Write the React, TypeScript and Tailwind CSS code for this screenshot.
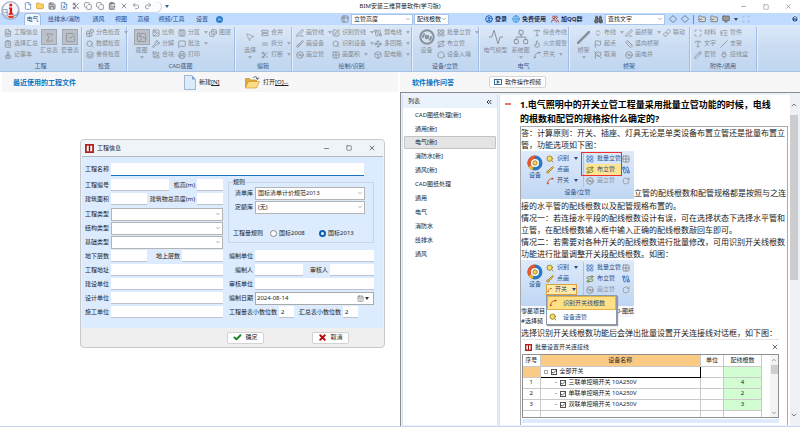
import React from "react";
import {
  FileText, ClipboardList, Sigma, SquareCheckBig, Blocks, Search, Layers, Image, Images, Columns3, MessageSquare,
  Wrench, Combine, Printer, MousePointer2, Scissors, PenLine, Brush, Disc3, Grid2x2, Spline, Network, Flag, FlagOff,
  Ruler, Type, Flame, Cable, LayoutGrid, Hexagon, SquarePen, Slash, Route, Box, Pencil, StretchHorizontal, Equal,
  Link, Table2, Undo2, Redo2, Save, Copy, ClipboardPaste, X, Minus, Square, ChevronDown, ChevronUp, ChevronsLeft,
  CircleUser, Globe, Users, Binoculars, Diamond, FolderOutput, Folder, Monitor, Scan, CircleHelp, Check, Play,
  CalendarDays, File as FileIcon, FileSearch, Waypoints, Stamp, ChevronsUpDown, Activity, ListTree, Plug, RotateCw,
} from "lucide-react";

type Icon = React.ComponentType<{ size?: number; strokeWidth?: number; className?: string; fill?: string }>;

function Caret({ className = "" }: { className?: string }) {
  return (
    <svg viewBox="0 0 4 3" className={`h-[3px] w-1 shrink-0 ${className}`}>
      <path d="M0 0h4L2 3z" fill="currentColor" />
    </svg>
  );
}

type RowItem = { icon: Icon; text: string; caret?: boolean };

function Column({ items, width }: { items: RowItem[]; width: string }) {
  return (
    <div className={`flex shrink-0 flex-col ${width}`}>
      {items.map((it) => (
        <button key={it.text} type="button" className="flex h-[11px] items-center gap-[2px] whitespace-nowrap">
          <it.icon size={8} strokeWidth={2.5} className="shrink-0 text-[#8b919a]" />
          <span>{it.text}</span>
          {it.caret && <Caret className="ml-[2px] text-[#a3abb8]" />}
        </button>
      ))}
    </div>
  );
}

function Big({ icon: I, text, width, caret, boxed, size = 15, weight = 1.5 }: {
  icon: Icon; text: string; width: string; caret?: boolean; boxed?: boolean; size?: number; weight?: number;
}) {
  return (
    <button type="button" className={`flex shrink-0 flex-col items-center whitespace-nowrap pt-[2px] ${width}`}>
      <span className={`flex h-4 w-4 items-center justify-center ${boxed ? "border border-[#a3a8b0] bg-[#bcc1c9]" : ""}`}>
        <I size={boxed ? 11 : size} strokeWidth={boxed ? 2 : weight} className="text-[#8b919a]" />
      </span>
      <span className="mt-[1px] leading-[9px]">{text}</span>
      {caret && <Caret className="mt-[1px] text-[#a3abb8]" />}
    </button>
  );
}

function Group({ title, width, children }: { title: string; width: string; children: React.ReactNode }) {
  return (
    <section className={`flex shrink-0 flex-col border-r border-[#9fbde2] shadow-[1px_0_0_#e6f0fc] ${width}`}>
      <div className="flex h-[34px] pl-1">{children}</div>
      <h2 className="text-center leading-[10px] text-[#3d5a85]">{title}</h2>
    </section>
  );
}

const quickIcons: { icon: Icon; color: string; fill: string; name: string }[] = [
  { icon: FileIcon, color: "text-[#4b6f9f]", fill: "white", name: "新建" },
  { icon: Folder, color: "text-[#c88d1d]", fill: "#ffd35c", name: "打开" },
  { icon: Save, color: "text-[#4b4b4b]", fill: "#d8d8d8", name: "保存" },
  { icon: FileSearch, color: "text-[#376fb5]", fill: "white", name: "预览" },
  { icon: Scissors, color: "text-[#555]", fill: "none", name: "剪切" },
  { icon: Copy, color: "text-[#666]", fill: "white", name: "复制" },
  { icon: Copy, color: "text-[#666]", fill: "white", name: "复制格式" },
  { icon: ClipboardPaste, color: "text-[#555]", fill: "#bbb", name: "粘贴" },
  { icon: X, color: "text-[#555]", fill: "none", name: "删除" },
  { icon: Undo2, color: "text-[#777]", fill: "none", name: "撤销" },
  { icon: Redo2, color: "text-[#777]", fill: "none", name: "重做" },
];

function AppMark() {
  return (
    <svg viewBox="0 0 20 20" className="absolute left-[1px] top-[1px] h-[19px] w-[19px]">
      <circle cx="10" cy="10" r="9.3" fill="#c9ced8" stroke="#7c91b5" strokeWidth="0.8" />
      <circle cx="10" cy="9" r="7.5" fill="#f4f7fb" />
      <path d="M2.5 9h4v7M4 12h3M13 15h4l1-4" stroke="#5d8bd0" fill="none" strokeWidth="0.8" />
      <circle cx="10.3" cy="4.3" r="1.6" fill="#d91515" />
      <path d="M8.3 6.8h3.4v6H13v1.6H8v-1.6h1.2V8.2h-.9z" fill="#d91515" />
      <path d="M7 15.5h7l-1.5 2.5h-4z" fill="#e0402c" />
    </svg>
  );
}

function InfoMark({ className = "h-[9px] w-[9px]" }: { className?: string }) {
  return (
    <svg viewBox="0 0 10 10" className={`shrink-0 ${className}`}>
      <path d="M0 0h10v10H0z" fill="#b3201d" />
      <path d="M2 2h2.3v6H2zM5.7 2H8v6H5.7z" fill="#fff" />
      <path d="M4.3 3h1.4v4H4.3z" fill="#7d1111" />
    </svg>
  );
}

function Pick({ label, value, className, box = "border-[#b4b4b4]" }: { label: string; value: string; className: string; box?: string }) {
  return (
    <div className={`relative ${className}`}>
      <select aria-label={label} className={`block h-full w-full appearance-none border bg-white pl-[2px] text-[#222] outline-none ${box}`}>
        <option>{value}</option>
      </select>
      <ChevronDown size={6} className="pointer-events-none absolute right-[2px] top-1/2 -translate-y-1/2 text-[#666]" />
    </div>
  );
}

function TitleBar() {
  return (
    <header className="grid h-[13px] shrink-0 grid-cols-[1fr_auto_1fr] items-center bg-white">
      <div className="flex items-center">
        <div className="ml-5 flex h-[12px] w-[142px] items-center gap-1 rounded-r-full border-b border-r border-[#cdd9ea] bg-[#fafcff] pl-1">
          {quickIcons.map((q) => (
            <button key={q.name} type="button" aria-label={q.name}>
              <q.icon size={8} strokeWidth={2} className={q.color} fill={q.fill} />
            </button>
          ))}
        </div>
        <Caret className="ml-[3px] text-[#3b5f96]" />
      </div>
      <h1 className="text-[#222]">BIM安装三维算量软件(学习版)</h1>
      <div className="flex justify-end gap-4 pr-2 text-[#777]">
        <button type="button" aria-label="最小化"><Minus size={7} /></button>
        <button type="button" aria-label="还原"><Square size={6} /></button>
        <button type="button" aria-label="关闭"><X size={7} /></button>
      </div>
    </header>
  );
}

function MenuBar() {
  const link = "flex items-center gap-[2px] whitespace-nowrap font-bold text-[#1b3157]";
  return (
    <nav className="flex h-3 shrink-0 items-center bg-[#bfdbff] text-[#20488c]">
      <div className="flex w-[341px] shrink-0 items-center pl-6">
        <button type="button" className="flex h-3 w-[17px] items-center justify-center rounded-t-sm border border-b-0 border-[#9dbbe0] bg-[#f3f8ff]">电气</button>
        <button type="button" className="w-[46px]">给排水/消防</button>
        <button type="button" className="w-[23px]">通风</button>
        <button type="button" className="w-[22px]">视图</button>
        <button type="button" className="w-[23px]">高级</button>
        <button type="button" className="w-[33px]">视频/工具</button>
        <button type="button" className="w-[28px]">设置</button>
        <button type="button" aria-label="收起" className="flex h-[7px] w-[7px] items-center justify-center rounded-full bg-[#2f7fd0] text-white">
          <ChevronUp size={5} strokeWidth={4} />
        </button>
      </div>
      <Table2 size={8} className="mr-[2px] shrink-0 text-[#777]" />
      <Pick label="高度" value="立管高度" className="h-[11px] w-[62px] shrink-0" box="border-[#a8c4e8]" />
      <Pick label="根数" value="配线根数" className="ml-[1px] h-[11px] w-[35px] shrink-0" box="border-[#a8c4e8]" />
      <div className="flex w-[145px] shrink-0 items-center gap-[5px] pl-9">
        <a href="#login" className={link}><CircleUser size={8} strokeWidth={3} className="text-[#1c63b7]" />登录</a>
        <a href="#free" className={link}><Globe size={8} className="text-[#2b8bd0]" />免费使用</a>
        <a href="#group" className={link}><Users size={8} strokeWidth={3} className="text-[#b04a3a]" />加QQ群</a>
      </div>
      <Binoculars size={9} className="mr-[2px] shrink-0 text-[#444]" fill="#777" />
      <Pick label="查找" value="查找文字" className="h-[11px] w-[60px] shrink-0" box="border-[#a8c4e8]" />
      <div className="flex items-center gap-1 pl-1 text-[#555]">
        <Diamond size={8} /><Diamond size={8} />
        <span className="h-[9px] w-px bg-[#6f8cb5]" />
        <FolderOutput size={8} fill="#ddd" /><FolderOutput size={8} fill="#ddd" /><Monitor size={8} fill="#999" />
        <Caret className="text-[#444]" />
        <Scan size={8} className="text-[#92a9c9]" />
      </div>
      <CircleHelp size={8} strokeWidth={3} className="ml-auto mr-[1px] shrink-0 text-white" fill="#174fa3" />
    </nav>
  );
}

function Ribbon() {
  return (
    <div className="flex h-[47px] shrink-0 overflow-hidden border-b border-[#a6c3e6] bg-linear-to-b from-[#dce9f9] via-[#cadcf2] to-[#c0d6f0] pt-[2px] text-[#858c96]">
      <Group title="工程" width="w-[82px]">
        <Column width="w-[34px]" items={[{ icon: FileText, text: "工程信息" }, { icon: ClipboardList, text: "选择汇总" }, { icon: Stamp, text: "记事本" }]} />
        <Big icon={Sigma} text="汇总表" width="w-[22px]" boxed />
        <Big icon={SquareCheckBig} text="套量表" width="w-[20px]" boxed />
      </Group>
      <Group title="检查" width="w-[45px]">
        <Column width="w-10" items={[{ icon: Blocks, text: "分色检查", caret: true }, { icon: Search, text: "数据检查" }, { icon: Layers, text: "重叠检查" }]} />
      </Group>
      <Group title="CAD底图" width="w-[108px]">
        <Big icon={Image} text="底图" width="w-[21px]" caret boxed />
        <Column width="w-[26px]" items={[{ icon: Image, text: "比例" }, { icon: Wrench, text: "分解" }, { icon: Combine, text: "合块" }]} />
        <Column width="w-[31px]" items={[{ icon: Columns3, text: "分区", caret: true }, { icon: MessageSquare, text: "批注", caret: true }, { icon: Printer, text: "打印" }]} />
        <Column width="w-6" items={[{ icon: Images, text: "图层" }]} />
      </Group>
      <Group title="编辑" width="w-[57px]">
        <Big icon={MousePointer2} text="选择" width="w-[22px]" caret size={10} />
        <Column width="w-[30px]" items={[{ icon: StretchHorizontal, text: "合并" }, { icon: Equal, text: "拆分", caret: true }, { icon: Scissors, text: "打断", caret: true }]} />
      </Group>
      <Group title="绘制/识别" width="w-[120px]">
        <Column width="w-[36px]" items={[{ icon: PenLine, text: "画管线", caret: true }, { icon: Brush, text: "画设备" }, { icon: Disc3, text: "画立管" }]} />
        <Column width="w-[42px]" items={[{ icon: SquarePen, text: "识别管线", caret: true }, { icon: Search, text: "识别设备", caret: true }, { icon: Grid2x2, text: "画面积", caret: true }]} />
        <Column width="w-[36px]" items={[{ icon: Cable, text: "弱电线", caret: true }, { icon: Waypoints, text: "多回路", caret: true }, { icon: Box, text: "配电箱", caret: true }]} />
      </Group>
      <Group title="设备/立管" width="w-[67px]">
        <Big icon={Disc3} text="设备" width="w-[21px]" size={16} weight={3} />
        <Column width="w-[41px]" items={[{ icon: LayoutGrid, text: "批量立管", caret: true }, { icon: Route, text: "布立管" }, { icon: Hexagon, text: "设备入墙" }]} />
      </Group>
      <Group title="电气" width="w-[90px]">
        <Big icon={Activity} text="电气模型" width="w-[25px]" size={16} />
        <Big icon={Network} text="系统图" width="w-[25px]" caret size={16} />
        <Column width="w-[35px]" items={[{ icon: Type, text: "综合布线" }, { icon: Flame, text: "火灾报警" }, { icon: Spline, text: "开关", caret: true }]} />
      </Group>
      <Group title="桥架" width="w-[121px]">
        <Big icon={Slash} text="桥架" width="w-[21px]" caret size={13} weight={5} />
        <Column width="w-[31px]" items={[{ icon: ChevronsUpDown, text: "布线", caret: true }, { icon: Flag, text: "起点" }, { icon: FlagOff, text: "取消" }]} />
        <Column width="w-[38px]" items={[{ icon: PenLine, text: "画桥架", caret: true }, { icon: Ruler, text: "竖向桥架" }, { icon: Disc3, text: "画电井" }]} />
        <Column width="w-[25px]" items={[{ icon: Link, text: "联动" }]} />
      </Group>
      <Group title="附件/通用" width="w-[67px]">
        <Column width="w-[26px]" items={[{ icon: Scan, text: "材料" }, { icon: Type, text: "文字" }, { icon: Pencil, text: "套管" }]} />
        <Column width="w-[34px]" items={[{ icon: ListTree, text: "管件" }, { icon: Slash, text: "支架" }, { icon: Plug, text: "接线盒" }]} />
      </Group>
    </div>
  );
}

function Field({ id, label, labelWidth, width = "flex-1", value = "" }: {
  id: string; label: string; labelWidth: string; width?: string; value?: string;
}) {
  return (
    <>
      <label htmlFor={id} className={`shrink-0 whitespace-nowrap pr-[2px] text-right ${labelWidth}`}>{label}</label>
      <input id={id} defaultValue={value} className={`h-3 min-w-0 border-b border-[#bdc3ca] bg-white px-[2px] outline-none ${width}`} />
    </>
  );
}

function Combo({ label, value = "", labelWidth, width = "flex-1" }: { label: string; value?: string; labelWidth: string; width?: string }) {
  return (
    <>
      <span className={`shrink-0 pr-[2px] text-right ${labelWidth}`}>{label}</span>
      <Pick label={label} value={value} className={`h-[13px] ${width}`} />
    </>
  );
}

function ProjectDialog() {
  const row = "flex h-[14px] items-center";
  return (
    <form
      role="dialog"
      aria-label="工程信息"
      className="absolute left-20 top-[67px] w-[305px] rounded-[4px] border border-[#c9c9c9] bg-[#efefef] text-[#222]"
      onSubmit={(e) => e.preventDefault()}
    >
      <div className="flex h-4 items-center rounded-t-[4px] bg-[#eff4f9] pl-1 pr-2">
        <InfoMark />
        <h2 className="ml-[3px]">工程信息</h2>
        <div className="ml-auto flex items-center gap-4 text-[#333]">
          <button type="button" aria-label="最小化"><Minus size={7} /></button>
          <button type="button" aria-label="最大化"><Square size={6} /></button>
          <button type="button" aria-label="关闭"><X size={8} /></button>
        </div>
      </div>
      <div className="mx-[1px] border-t border-[#b5b9be] bg-[#dcebfd] pb-[9px] pt-[6px]">
        <div className="flex h-[15px] items-start">
          <label htmlFor="name" className="w-[29px] shrink-0 pr-[2px] pt-[2px] text-right leading-[9px]">工程名称</label>
          <input id="name" className="h-[13px] w-[253px] border-b border-[#1a74c4] bg-white px-[2px] outline-none" autoFocus />
        </div>
        <div className="flex">
          <div className="w-[141px] shrink-0">
            <div className={row}>
              <Field id="no" label="工程编号" labelWidth="w-[29px]" width="w-[58px]" />
              <Field id="eave" label="檐高(m)" labelWidth="w-7" width="w-[26px]" />
            </div>
            <div className={row}>
              <Field id="area" label="建筑面积" labelWidth="w-[29px]" width="w-9" />
              <Field id="height" label="建筑物总高度(m)" labelWidth="w-[50px]" width="w-[26px]" />
            </div>
            <div className={`${row} mt-[1px]`}><Combo label="工程类型" labelWidth="w-[29px]" /></div>
            <div className={row}><Combo label="结构类型" labelWidth="w-[29px]" /></div>
            <div className={row}><Combo label="基础类型" labelWidth="w-[29px]" /></div>
            <div className={row}>
              <Field id="below" label="地下层数" labelWidth="w-[29px]" width="w-9" />
              <Field id="above" label="地上层数" labelWidth="w-[35px]" />
            </div>
            <div className={row}><Field id="addr" label="工程地址" labelWidth="w-[29px]" /></div>
            <div className={row}><Field id="owner" label="建设单位" labelWidth="w-[29px]" /></div>
            <div className={row}><Field id="design" label="设计单位" labelWidth="w-[29px]" /></div>
            <div className={row}><Field id="build" label="施工单位" labelWidth="w-[29px]" /></div>
          </div>
          <div className="ml-[3px] w-[148px]">
            <fieldset className="ml-[2px] h-[65px] border border-[#c8d6e6]">
              <legend className="ml-1 leading-[8px]">规则</legend>
              <div className={row}><Combo label="清单库" value="国标清单计价规范2013" labelWidth="w-[26px]" width="w-[110px]" /></div>
              <div className={row}><Combo label="定额库" value="(无)" labelWidth="w-[26px]" width="w-[110px]" /></div>
              <div className="mt-[13px] flex h-3 items-center pl-1">
                <span className="mr-[7px] whitespace-nowrap">工程量规则</span>
                <label className="flex w-[49px] items-center gap-[2px] whitespace-nowrap">
                  <input type="radio" name="rule" className="h-[7px] w-[7px] appearance-none rounded-full border border-[#888] bg-white" />
                  国标2008
                </label>
                <label className="flex items-center gap-[2px] whitespace-nowrap">
                  <input type="radio" name="rule" defaultChecked className="h-[7px] w-[7px] appearance-none rounded-full border-2 border-[#0a5fb4] bg-white" />
                  国标2013
                </label>
              </div>
            </fieldset>
            <div className={`${row} mt-[6px]`}><Field id="unit" label="编制单位" labelWidth="w-[29px]" /></div>
            <div className={row}>
              <Field id="author" label="编制人" labelWidth="w-[29px]" width="w-12" />
              <Field id="checker" label="审核人" labelWidth="w-[27px]" />
            </div>
            <div className={row}><Field id="audit" label="审核单位" labelWidth="w-[29px]" /></div>
            <div className={row}>
              <label htmlFor="date" className="w-[29px] shrink-0 pr-[2px] text-right">编制日期</label>
              <div className="flex h-[13px] flex-1 items-center border border-[#aaa] bg-white pr-1">
                <input id="date" defaultValue="2024-08-14" className="min-w-0 flex-1 pl-[1px] outline-none" />
                <CalendarDays size={7} className="text-[#777]" />
                <Caret className="ml-[1px] text-[#333]" />
              </div>
            </div>
            <div className={row}>
              <Field id="d1" label="工程量表小数位数" labelWidth="w-[53px]" width="w-[15px]" value="2" />
              <Field id="d2" label="汇总表小数位数" labelWidth="w-[49px]" width="w-[15px]" value="2" />
            </div>
          </div>
        </div>
      </div>
      <div className="flex h-[19px] items-center gap-12 pl-[146px]">
        <button type="submit" className="flex h-3 w-[37px] items-center justify-center gap-[3px] rounded-[2px] border border-[#d2d2d2] bg-white">
          <Check size={9} strokeWidth={5} className="text-[#0d8420]" />确定
        </button>
        <button type="button" className="flex h-3 w-[37px] items-center justify-center gap-[3px] rounded-[2px] border border-[#d2d2d2] bg-white">
          <X size={9} strokeWidth={5} className="text-[#b60d12]" />取消
        </button>
      </div>
    </form>
  );
}

function RecentPane() {
  return (
    <main className="relative flex w-1/2 shrink-0 flex-col bg-white">
      <div className="mx-[2px] flex h-5 shrink-0 items-center bg-[#f7f7f7] pl-[11px]">
        <h2 className="w-[171px] text-[7px] font-bold text-[#0b74c4]">最近使用的工程文件</h2>
        <button type="button" className="flex w-[61px] items-center gap-[3px]">
          <svg viewBox="0 0 12 15" className="h-[15px] w-3">
            <path d="M.5.5h7.5l3.5 4v10H.5z" fill="#dcebfb" stroke="#8ea9c8" strokeWidth="0.8" />
            <path d="M8 .5v4h3.5z" fill="#7fa3cc" />
          </svg>
          <span>新建<u>[N]</u></span>
        </button>
        <button type="button" className="flex items-center gap-[3px] whitespace-nowrap">
          <svg viewBox="0 0 15 13" className="h-[13px] w-[15px]">
            <path d="M.5 11.500V2.500h4l1 1.500h6v7.500z" fill="#e3a83a" stroke="#b98628" strokeWidth="0.6" />
            <path d="M.5 12 3.500 5.500h11L11.500 12z" fill="#ffdc82" stroke="#c8942f" strokeWidth="0.6" />
            <path d="M8 2c1.500-2 4-1.500 4.500.8M11 2l1.600 1.500L13.800 1.500" stroke="#44586f" fill="none" strokeWidth="0.9" />
          </svg>
          <span>打开<u>[O]...</u></span>
        </button>
      </div>
      <ProjectDialog />
    </main>
  );
}

const topics = ["CAD图纸处理[新]", "通用[新]", "电气[新]", "消防水[新]", "通风[新]", "CAD图纸处理", "通用", "电气", "消防水", "给排水", "通风"];

function TopicList() {
  return (
    <aside className="flex w-24 shrink-0 flex-col border-x border-[#d3e1f4] bg-white text-[#222]">
      <div className="flex h-[13px] shrink-0 items-center justify-between bg-[#eaf2fc] pl-[5px] pr-1">
        <h3>列表</h3>
        <ChevronsLeft size={8} strokeWidth={3} className="text-[#333]" />
      </div>
      <ul>
        {topics.map((t, i) => (
          <li key={t}>
            <a
              href={`#topic${i}`}
              className={
                i === 2
                  ? "mx-[1px] flex h-[13px] items-center rounded-[1px] border border-[#c3c3c3] bg-[#e4e4e4] pl-[10px]"
                  : "flex h-[14px] items-center pl-3"
              }
            >
              {t}
            </a>
          </li>
        ))}
      </ul>
    </aside>
  );
}

function DeviceMark() {
  return (
    <svg viewBox="0 0 16 16" className="h-4 w-4">
      <circle cx="8" cy="8" r="5.800" fill="none" stroke="#2a78c2" strokeWidth="3.400" />
      <path d="M8 2.200A5.800 5.800 0 0 0 3 11" fill="none" stroke="#e25a2b" strokeWidth="3.400" />
      <path d="M3 11a5.800 5.800 0 0 0 3 2.400" fill="none" stroke="#f0b32e" strokeWidth="3.400" />
      <circle cx="8" cy="8" r="3.800" fill="#fff" />
      <circle cx="8" cy="8" r="2.200" fill="#ffd65a" stroke="#8a6a1c" strokeWidth="0.800" />
    </svg>
  );
}

function MiniRow({ icon: I, text, color, className = "", fill = "none", caret }: {
  icon: Icon; text: string; color: string; className?: string; fill?: string; caret?: boolean;
}) {
  return (
    <span className={`flex h-[11px] items-center gap-[3px] whitespace-nowrap ${className}`}>
      <I size={8} strokeWidth={2.5} className={color} fill={fill} />
      {text}
      {caret && <Caret className="ml-[2px]" />}
    </span>
  );
}

function MiniRibbon({ second = false }: { second?: boolean }) {
  return (
    <span className="flex h-9 pt-[2px]">
      <span className="flex w-[25px] flex-col items-center pl-[3px] pt-[2px]">
        <DeviceMark />
        <span className="leading-[9px]">设备</span>
      </span>
      <span className="flex w-[37px] flex-col">
        <MiniRow icon={Search} text="识别" color="text-[#8f7a1f]" fill="#f6dc6a" caret />
        <MiniRow icon={Brush} text="点画" color="text-[#a3761b]" fill="#f3d35d" />
        <MiniRow icon={Spline} text="开关" color="text-[#cc4a29]" className={second ? "mr-[6px] border border-[#d8a23e] bg-[#ffe9a6]" : ""} caret />
      </span>
      <span className={`flex w-[39px] flex-col border-l border-[#a9c2e3] pl-[2px] ${second ? "" : "relative"}`}>
        {!second && <span className="absolute -left-[3px] -top-[1px] h-6 w-[41px] border border-[#ee2d2d]" />}
        <MiniRow icon={LayoutGrid} text="批量立管" color="text-[#4d83c7]" />
        <MiniRow icon={Route} text="布立管" color="text-[#6b7f36]" className={second ? "" : "bg-[#ffe490]"} />
        <MiniRow icon={Disc3} text="画立管" color="text-[#888]" className="text-[#8b94a1]" />
      </span>
      <span className="flex flex-col">
        <MiniRow icon={Grid2x2} text="" color="text-[#888]" />
        <MiniRow icon={Cable} text="" color="text-[#2b6cb8]" />
        <MiniRow icon={RotateCw} text="" color="text-[#999]" />
      </span>
    </span>
  );
}

const miniBox = "overflow-hidden bg-linear-to-b from-[#dfeafa] to-[#bfd6f3] text-[6px] leading-[9px] text-[#2b4a7d]";

const switches: [string, string, string][] = [
  ["1", "三联单控暗开关 10A250V", "4"],
  ["2", "单联单控暗开关 10A250V", "2"],
  ["3", "双联单控暗开关 10A250V", "3"],
];

function SwitchTable() {
  const cell = "h-[11px] border-b border-r border-[#c9c9c9] p-0";
  const side = "border-r border-[#c9c9c9] p-0";
  const box = "h-[6px] w-[6px] shrink-0 appearance-none border border-[#555] bg-white";
  return (
    <div className="ml-[1px] mr-[8px] flex flex-1 flex-col bg-white text-[6px] leading-[9px]">
      <div className="flex h-[15px] shrink-0 items-center gap-[3px] border-t border-[#e3e3e3] pl-[3px]">
        <InfoMark className="h-[7px] w-[7px]" />
        <h3>批量设置开关连接线</h3>
        <X size={8} className="ml-auto text-[#333]" />
      </div>
      <div className="flex overflow-hidden border border-[#8f8f8f]">
        <div className="min-w-0 flex-1">
          <table className="w-full table-fixed border-collapse">
            <colgroup>
              <col className="w-[17px]" /><col /><col className="w-[23px]" /><col className="w-[38px]" />
            </colgroup>
            <thead>
              <tr className="whitespace-nowrap">
                <th className={`${cell} font-normal`}>序号</th>
                <th className={`${cell} bg-[#fbcb85] font-normal`}>设备名称</th>
                <th className={`${cell} font-normal`}>单位</th>
                <th className={`${cell} font-normal`}>配线根数</th>
              </tr>
            </thead>
            <tbody>
              <tr>
                <td className={`${cell} bg-[#fbcb85]`} />
                <td className="h-[11px] border border-black p-0">
                  <label className="flex items-center gap-[3px] pl-[3px]">
                    <span className="flex h-1 w-1 items-center justify-center border border-[#aaa]" />
                    <span className="relative flex">
                      <input type="checkbox" defaultChecked className={box} />
                      <Check size={6} strokeWidth={3} className="pointer-events-none absolute left-0 top-0" />
                    </span>
                    全部开关
                  </label>
                </td>
                <td className={cell} />
                <td className={`${cell} bg-[#d2fdd2]`} />
              </tr>
              {switches.map(([n, name, count]) => (
                <tr key={n}>
                  <td className={`${cell} text-center`}>{n}</td>
                  <td className={cell}>
                    <label className="flex items-center gap-[3px] whitespace-pre pl-[14px]">
                      <span className="h-px w-[2px] bg-[#aaa]" />
                      <span className="relative flex">
                        <input type="checkbox" defaultChecked className={box} />
                        <Check size={6} strokeWidth={3} className="pointer-events-none absolute left-0 top-0" />
                      </span>
                      {name}
                    </label>
                  </td>
                  <td className={cell} />
                  <td className={`${cell} bg-[#d2fdd2] text-center`}>{count}</td>
                </tr>
              ))}
              <tr><td className={`h-[7px] ${side}`} /><td className={side} /><td className={side} /><td className={side} /></tr>
            </tbody>
          </table>
        </div>
        <div className="ml-2 flex w-2 flex-col items-center bg-[#f3f3f3] text-[#444]">
          <ChevronUp size={6} className="my-[2px] shrink-0" />
          <span className="h-[9px] w-[7px] bg-[#cdcdcd]" />
          <ChevronDown size={6} className="mb-[1px] mt-auto shrink-0" />
        </div>
      </div>
      <div className="mt-[1px] h-1 bg-[#dcebfd]" />
    </div>
  );
}

function Article() {
  return (
    <article className="ml-[1px] flex min-w-0 flex-1 border-l border-[#d3e1f4] bg-white">
      <div className="w-5 shrink-0 pl-[5px] pt-[8px]"><span className="block h-[2px] w-[6px] bg-[#e0787a]" /></div>
      <div className="flex min-w-0 flex-1 flex-col overflow-hidden">
        <h2 className="mt-[3px] shrink-0 whitespace-nowrap text-[9px] font-bold leading-[14px] text-black">
          1.电气照明中的开关立管工程量采用批量立管功能的时候，电线<br />的根数和配管的规格按什么确定的?
        </h2>
        <div className="mr-[2px] flex flex-1 flex-col overflow-hidden border border-b-0 border-[#a9a9a9] text-[8px] leading-[12px] text-[#222]">
          <p className="whitespace-nowrap">答：计算原则：开关、插座、灯具无论是单类设备布置立管还是批量布置立<br />管，功能选项如下图：</p>
          <p className="flex items-end whitespace-nowrap">
            <span className={`${miniBox} h-12 w-[113px]`}>
              <MiniRibbon />
              <span className="block pt-[1px] text-center">设备/立管</span>
            </span>
            立管的配线根数和配管规格都是按照与之连
          </p>
          <p className="whitespace-nowrap pt-[1px]">接的水平管的配线根数以及配管规格布置的。</p>
          <p className="whitespace-nowrap">情况一：若连接水平段的配线根数设计有误，可在选择状态下选择水平管和<br />立管，在配线根数输入框中输入正确的配线根数敲回车即可。</p>
          <p className="whitespace-nowrap">情况二：若需要对各种开关的配线根数进行批量修改，可用识别开关线根数<br />功能进行批量调整开关段配线根数。如图：</p>
          <div className="relative w-[113px] text-[6px] leading-[9px]">
            <div className={`${miniBox} h-[46px]`}><MiniRibbon second /></div>
            <div className="flex h-[11px] items-center justify-between whitespace-nowrap bg-[#f5f7fa]"><span>零星项目</span><span>0-图纸</span></div>
            <div className="h-[9px] w-[25px] overflow-hidden whitespace-nowrap">#选择频</div>
            <div className="absolute left-[25px] top-[35px] w-[71px] border border-[#8d99aa] bg-white text-[#2b4a7d] shadow-[1px_1px_1px_#999]">
              <MiniRow icon={Spline} text="识别开关线根数" color="text-[#cc4a29]" className="h-[14px]! gap-[6px]! border border-[#e0b24c] bg-[#ffe085] pl-[1px]" />
              <MiniRow icon={Search} text="设备连管" color="text-[#8f7a1f]" fill="#f6dc6a" className="h-[14px]! gap-[6px]! pl-[2px]" />
            </div>
          </div>
          <p className="whitespace-nowrap pt-[1px]">选择识别开关线根数功能后会弹出批量设置开关连接线对话框，如下图：</p>
          <SwitchTable />
        </div>
      </div>
      <div className="flex w-2 shrink-0 flex-col items-center bg-[#f0f0f0] text-[#444]">
        <ChevronUp size={8} className="my-[6px] shrink-0" />
        <span className="h-1/2 w-2 bg-[#cdcdcd]" />
        <ChevronDown size={8} className="mb-[6px] mt-auto shrink-0" />
      </div>
    </article>
  );
}

function HelpPane() {
  return (
    <section className="flex min-w-0 flex-1 flex-col">
      <div className="flex h-5 shrink-0 items-center bg-[#f7f7f7] pl-3">
        <h2 className="w-[77px] text-[7px] font-bold text-[#0b74c4]">软件操作问答</h2>
        <button type="button" className="flex h-3 items-center gap-[3px] whitespace-nowrap rounded-[2px] border border-[#d6d6d6] bg-white px-1">
          <span className="flex h-[6px] w-2 items-center justify-center border border-[#3a6f9f]"><Play size={4} className="text-[#3a6f9f]" fill="#3a6f9f" /></span>
          软件操作视频
        </button>
      </div>
      <div className="flex min-h-0 flex-1 border-l border-t border-[#8c8c8c] bg-[#eaf2fc] pb-[1px] pl-[1px] pr-[2px] pt-[2px]">
        <TopicList />
        <Article />
      </div>
    </section>
  );
}

export default function App() {
  return (
    <div className="flex h-screen flex-col overflow-hidden bg-white font-['Noto_Sans','Noto_Sans_CJK_SC',sans-serif] text-[6px] leading-[9px] text-[#222]">
      <div className="relative shrink-0">
        <TitleBar />
        <MenuBar />
        <AppMark />
      </div>
      <Ribbon />
      <div className="flex min-h-0 flex-1 border-b border-[#c5d5ea]">
        <RecentPane />
        <HelpPane />
      </div>
    </div>
  );
}
